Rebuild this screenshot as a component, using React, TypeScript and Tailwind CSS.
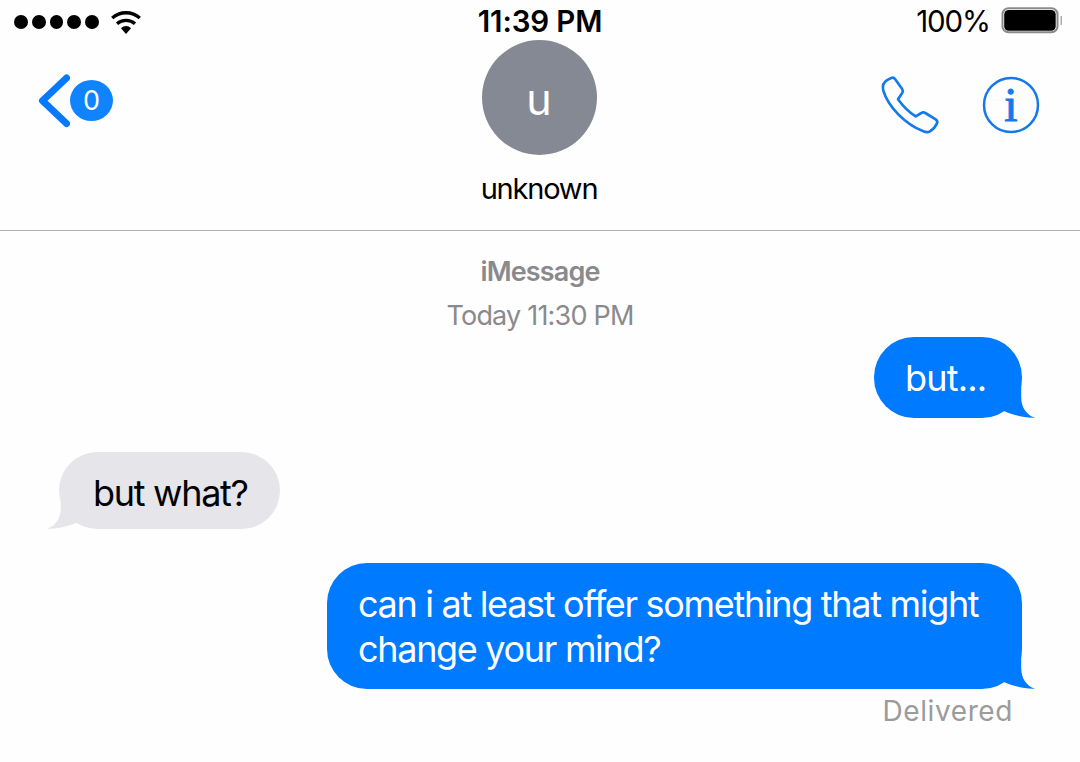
import type { ReactNode } from "react";

type Message = {
  id: number;
  text: string;
  mine: boolean;
  className: string;
};

const messages: Message[] = [
  { id: 1, text: "but...", mine: true, className: "w-[148px] h-[81px] pt-[19px] tracking-[-0.8px]" },
  { id: 2, text: "but what?", mine: false, className: "w-[221px] h-[77px] mt-[34px] pt-[19px] tracking-[-1.3px]" },
  {
    id: 3,
    text: "can i at least offer something that might change your mind?",
    mine: true,
    className: "w-[695px] h-[126px] mt-[34px] pt-[19px] tracking-[-1.31px]",
  },
];

function WifiIcon() {
  return (
    <svg width="32" height="24" viewBox="0 0 32 24" fill="none">
      <path d="M2.2 8C10 1 22 1 29.8 8" stroke="black" strokeWidth="3.3" />
      <path d="M7 13.700c5.200-4.500 12.800-4.500 18 0" stroke="black" strokeWidth="3.3" />
      <path d="M11 18.300c3-3 7-3 10 0l-5 5.600z" fill="black" />
    </svg>
  );
}

function BatteryIcon() {
  return (
    <svg width="62" height="28" viewBox="0 0 62 28" fill="none">
      <rect x="2.500" y="2.300" width="55" height="24" rx="6" stroke="#8a8a8a" strokeWidth="2" />
      <rect x="4.200" y="4" width="51.500" height="20.800" rx="4.500" fill="black" />
      <path d="M61.200 10v9" stroke="#9a9a9a" strokeWidth="1.200" />
    </svg>
  );
}

function PhoneIcon() {
  return (
    <svg width="60" height="60" viewBox="60 225 180 180" fill="none" stroke="#1479ea" strokeWidth="8" strokeLinejoin="round">
      <path d="M69 259C69 249 82 239 94 234Q101 231 105 237L126 266Q130 272 127 278L114 298C130 320 146 337 167 349L184 339Q190 335 196 339L227 358Q234 363 231 370C227 380 218 389 210 394Q202 399 190 394C136 373 84 320 70 272Q68 265 69 259Z" />
    </svg>
  );
}

function InfoIcon() {
  return (
    <svg width="58" height="58" viewBox="0 0 58 58" className="mt-px">
      <circle cx="29" cy="29" r="27" fill="none" stroke="#1479ea" strokeWidth="2.500" />
      <text x="29" y="44.500" textAnchor="middle" fontSize="48" fill="#1479ea" stroke="#1479ea" strokeWidth="1" className="font-['Liberation_Serif',serif]">
        i
      </text>
    </svg>
  );
}

function Bubble({ message, children }: { message: Message; children: ReactNode }) {
  return (
    <div
      className={`relative rounded-[40px] text-[36px] leading-[45px] ${message.className} ${
        message.mine
          ? "self-end mr-[58px] pl-[31px] pr-[20px] bg-[#007aff] text-white"
          : "self-start ml-[59px] pl-[34px] bg-[#e5e5ea] text-black"
      }`}
    >
      {children}
      <svg
        width="32"
        height="41"
        viewBox="0 0 32 41"
        className={`absolute bottom-0 ${message.mine ? "-right-[13px]" : "-left-[12px] -scale-x-100"}`}
      >
        <path
          d="M8 0H18.200V20C18.200 30 23 38 32 40.700C20 41 10 38 1 34L0 20Z"
          fill={message.mine ? "#007aff" : "#e5e5ea"}
        />
      </svg>
    </div>
  );
}

export default function App() {
  return (
    <main className="w-[1080px] h-[762px] overflow-hidden bg-[#fefefe] text-black font-['Inter',sans-serif]">
      <header className="h-[231px] border-b border-[#b0b0b2]">
        <div className="grid grid-cols-3 h-10">
          <div className="flex items-start pl-[14px] pt-[10px]">
            <div className="flex gap-1 pt-[5px] mr-[11px]">
              {[0, 1, 2, 3, 4].map((i) => (
                <span key={i} className="size-[13.8px] rounded-full bg-black" />
              ))}
            </div>
            <WifiIcon />
          </div>
          <div className="text-center text-[29.5px] leading-[43px] font-semibold tracking-[-0.15px] whitespace-nowrap">11:39 PM</div>
          <div className="flex justify-end pr-[18px]">
            <span className="text-[29.5px] leading-[43px] tracking-[-1.1px] mr-[10px]">100%</span>
            <div className="pt-[6px]">
              <BatteryIcon />
            </div>
          </div>
        </div>

        <div className="grid grid-cols-3">
          <div className="flex items-start pl-[37px] pt-[33px]">
            <svg width="33" height="56" viewBox="0 0 33 56" fill="none">
              <path d="M29.500 5L5.500 27.700L29.500 50.500" stroke="#067aff" strokeWidth="7" strokeLinecap="round" strokeLinejoin="round" />
            </svg>
            <span className="flex items-center justify-center w-[43px] h-[41px] mt-[7px] pt-0.5 rounded-[50%] bg-[#1083fe] text-white text-[27px]">
              0
            </span>
          </div>
          <div className="flex flex-col items-center pr-0.5">
            <div className="flex items-center justify-center size-[115px] rounded-full bg-[#858993] text-white text-[43px] pt-1">u</div>
            <div className="mt-[14px] text-[29px] leading-10 tracking-[-1.2px]">unknown</div>
          </div>
          <div className="flex items-start justify-end gap-[42px] pt-[35px] pr-[40px]">
            <PhoneIcon />
            <InfoIcon />
          </div>
        </div>
      </header>

      <section className="flex flex-col">
        <div className="flex flex-col items-center h-[106px] pt-[19px] text-[#8a8a8d] text-[27px] leading-[44px]">
          <span className="font-semibold tracking-[-0.85px]">iMessage</span>
          <span className="tracking-[-0.8px]">Today 11:30 PM</span>
        </div>
        {messages.map((m) => (
          <Bubble key={m.id} message={m}>
            {m.text}
          </Bubble>
        ))}
        <div className="self-end mr-[67px] text-[28px] leading-[44px] text-[#9b9b9b] tracking-[0.6px]">Delivered</div>
      </section>
    </main>
  );
}
